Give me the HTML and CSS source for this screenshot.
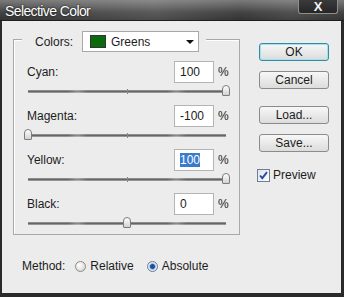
FILE: index.html
```html
<!doctype html>
<html lang="en">
<head>
    <meta charset="UTF-8">
    <title>Selective Color</title>
    <link rel="stylesheet" href="styles.css">
</head>
<body>
<div class="window">
    <div class="titlebar">
        <span class="title">Selective Color</span>
        <span class="close">X</span>
    </div>

    <div class="pane">
        <div class="main">
            <div class="group">
                <div class="legend">
                    <span class="label">Colors:</span>
                    <div class="select">
                        <span class="swatch"></span>
                        <span class="select-text">Greens</span>
                        <span class="arrow"></span>
                    </div>
                </div>

                <div class="row">
                    <span class="label">Cyan:</span>
                    <span class="field">100</span>
                    <span class="pct">%</span>
                </div>
                <div class="slider">
                    <div class="track"><span class="tick"></span></div>
                    <span class="thumb" style="left: 195px"></span>
                </div>

                <div class="row">
                    <span class="label">Magenta:</span>
                    <span class="field">-100</span>
                    <span class="pct">%</span>
                </div>
                <div class="slider">
                    <div class="track"><span class="tick"></span></div>
                    <span class="thumb" style="left: -3px"></span>
                </div>

                <div class="row">
                    <span class="label">Yellow:</span>
                    <span class="field"><span class="selected">100</span></span>
                    <span class="pct">%</span>
                </div>
                <div class="slider">
                    <div class="track"><span class="tick"></span></div>
                    <span class="thumb" style="left: 195px"></span>
                </div>

                <div class="row">
                    <span class="label">Black:</span>
                    <span class="field">0</span>
                    <span class="pct">%</span>
                </div>
                <div class="slider">
                    <div class="track"><span class="tick"></span></div>
                    <span class="thumb" style="left: 96px"></span>
                </div>
            </div>

            <div class="method">
                <span class="method-label">Method:</span>
                <span class="radio"></span>
                <span class="radio-text">Relative</span>
                <span class="radio checked"></span>
                <span class="radio-text">Absolute</span>
            </div>
        </div>

        <div class="side">
            <div class="button default">OK</div>
            <div class="button">Cancel</div>
            <div class="button spaced">Load...</div>
            <div class="button">Save...</div>
            <div class="check-row">
                <svg class="check" width="13" height="13" viewBox="0 0 13 13">
                    <defs>
                        <linearGradient id="cb" x1="0" y1="0" x2="1" y2="1">
                            <stop offset="0" stop-color="#dfe3ea"/>
                            <stop offset="1" stop-color="#ffffff"/>
                        </linearGradient>
                    </defs>
                    <rect x="0.5" y="0.5" width="12" height="12" fill="url(#cb)" stroke="#6f7e96"/>
                    <path d="M3 6.5 L5.3 9.2 L10 3.2" fill="none" stroke="#2b49a8" stroke-width="1.9"/>
                </svg>
                <span>Preview</span>
            </div>
        </div>
    </div>
</div>
</body>
</html>
```

FILE: styles.css
```css
html, body {
    margin: 0;
    padding: 0;
}
body {
    width: 344px;
    height: 297px;
    overflow: hidden;
    font-family: "Liberation Sans", Arial, sans-serif;
    font-size: 12px;
    color: #1c1c1c;
}
.window {
    width: 344px;
    height: 297px;
    display: flex;
    flex-direction: column;
}

/* title bar */
.titlebar {
    height: 21px;
    flex: none;
    display: flex;
    align-items: flex-start;
    background:
        linear-gradient(to right, rgba(255,255,255,0) 0%, rgba(255,255,255,.12) 45%, rgba(255,255,255,0) 70%, rgba(255,255,255,.08) 85%, rgba(255,255,255,0) 100%),
        linear-gradient(to bottom, #7a7a7a 0%, #5c5c5c 35%, #444 60%, #333 100%);
    border-bottom: 1px solid #1e1e1e;
    box-sizing: border-box;
}
.title {
    margin: 3px 0 0 5px;
    color: #fff;
    font-size: 14px;
    letter-spacing: -0.6px;
    text-shadow: 0 0 2px #000;
}
.close {
    margin-left: auto;
    margin-right: 6px;
    width: 40px;
    height: 14px;
    box-sizing: border-box;
    border: 1px solid #8e8e8e;
    border-top: none;
    border-radius: 0 0 3px 3px;
    background: linear-gradient(to bottom, #3a3a3a, #262626);
    color: #f4f4f4;
    font-weight: bold;
    font-size: 13px;
    line-height: 13px;
    text-align: center;
}

/* window body */
.pane {
    flex: 1;
    display: flex;
    background: #ececec;
    border-left: 2px solid #2a2a2a;
    border-right: 3px solid #2a2a2a;
    border-bottom: 4px solid #2a2a2a;
}
.main {
    margin-left: 11px;
    padding-top: 18px;
}
.group {
    position: relative;
    width: 227px;
    height: 196px;
    box-sizing: border-box;
    border: 1px solid #a9a9a9;
    box-shadow: inset 1px 1px 0 #fff;
    padding: 21px 12px 0 13px;
}
.legend {
    position: absolute;
    top: -9px;
    left: 8px;
    padding: 0 7px 0 13px;
    display: flex;
    align-items: center;
    background: #ececec;
}
.legend .label {
    margin-right: 9px;
}
.select {
    width: 117px;
    height: 21px;
    box-sizing: border-box;
    border: 1px solid #a8a8a8;
    background: #fff;
    display: flex;
    align-items: center;
    padding-left: 7px;
}
.swatch {
    width: 14px;
    height: 11px;
    border: 1px solid #333;
    background: #0b6a0b;
}
.select-text {
    margin-left: 5px;
    flex: 1;
}
.arrow {
    width: 0;
    height: 0;
    border-left: 4px solid transparent;
    border-right: 4px solid transparent;
    border-top: 4px solid #111;
    margin-right: 4px;
}

.row {
    display: flex;
    align-items: center;
    height: 22px;
}
.row .label {
    flex: 1;
}
.field {
    width: 40px;
    height: 22px;
    box-sizing: border-box;
    border: 1px solid #b4b4b4;
    background: #fff;
    padding-left: 5px;
    line-height: 20px;
}
.selected {
    background: #3a7bd0;
    color: #fff;
}
.pct {
    margin-left: 4px;
    width: 9px;
}
.slider {
    position: relative;
    height: 22px;
}
.track {
    position: relative;
    margin: 0 0 0 1px;
    top: 7px;
    width: 198px;
    height: 3px;
    background:
        linear-gradient(to right, rgba(255,255,255,0) 0 20%, rgba(255,255,255,.25) 25%, rgba(255,255,255,0) 30% 70%, rgba(255,255,255,.25) 75%, rgba(255,255,255,0) 80%),
        linear-gradient(to bottom, #a0a0a0, #666 50%, #adadad);
}
.tick {
    position: absolute;
    left: 99px;
    top: -1px;
    width: 1px;
    height: 5px;
    background: #888;
}
.thumb {
    position: absolute;
    top: 2px;
    width: 8px;
    height: 11px;
    box-sizing: border-box;
    border: 1px solid #7c7c7c;
    border-radius: 4px 4px 1px 1px;
    background: linear-gradient(to bottom, #ffffff, #d2d2d2);
}

.method {
    display: flex;
    align-items: center;
    margin-top: 24px;
    padding-left: 9px;
    height: 14px;
}
.method-label {
    margin-right: 10px;
}
.radio {
    width: 11px;
    height: 11px;
    box-sizing: border-box;
    border-radius: 50%;
    border: 1px solid #8a8a8a;
    background: radial-gradient(circle at 35% 35%, #ffffff, #cfcfcf);
    margin-right: 4px;
}
.radio.checked {
    margin-left: 13px;
    border-color: #6b7b95;
    background: radial-gradient(circle, #1d4f9b 0 2px, #5a8fd6 2.5px, #dfe7f3 3.5px);
}

/* buttons */
.side {
    margin-left: 19px;
    padding-top: 22px;
    display: flex;
    flex-direction: column;
}
.button {
    width: 70px;
    height: 18px;
    box-sizing: border-box;
    border: 1px solid #8b8b8b;
    border-radius: 3px;
    background: linear-gradient(to bottom, #f7f7f7, #dcdcdc);
    text-align: center;
    line-height: 16px;
    margin-bottom: 10px;
}
.button.default {
    border-color: #2e8ea6;
    box-shadow: inset 0 0 0 1px #a6e0ee;
}
.button.spaced {
    margin-top: 7px;
}
.check-row {
    display: flex;
    align-items: center;
    margin-top: 6px;
    margin-left: -2px;
}
.check {
    margin-right: 3px;
}
```
